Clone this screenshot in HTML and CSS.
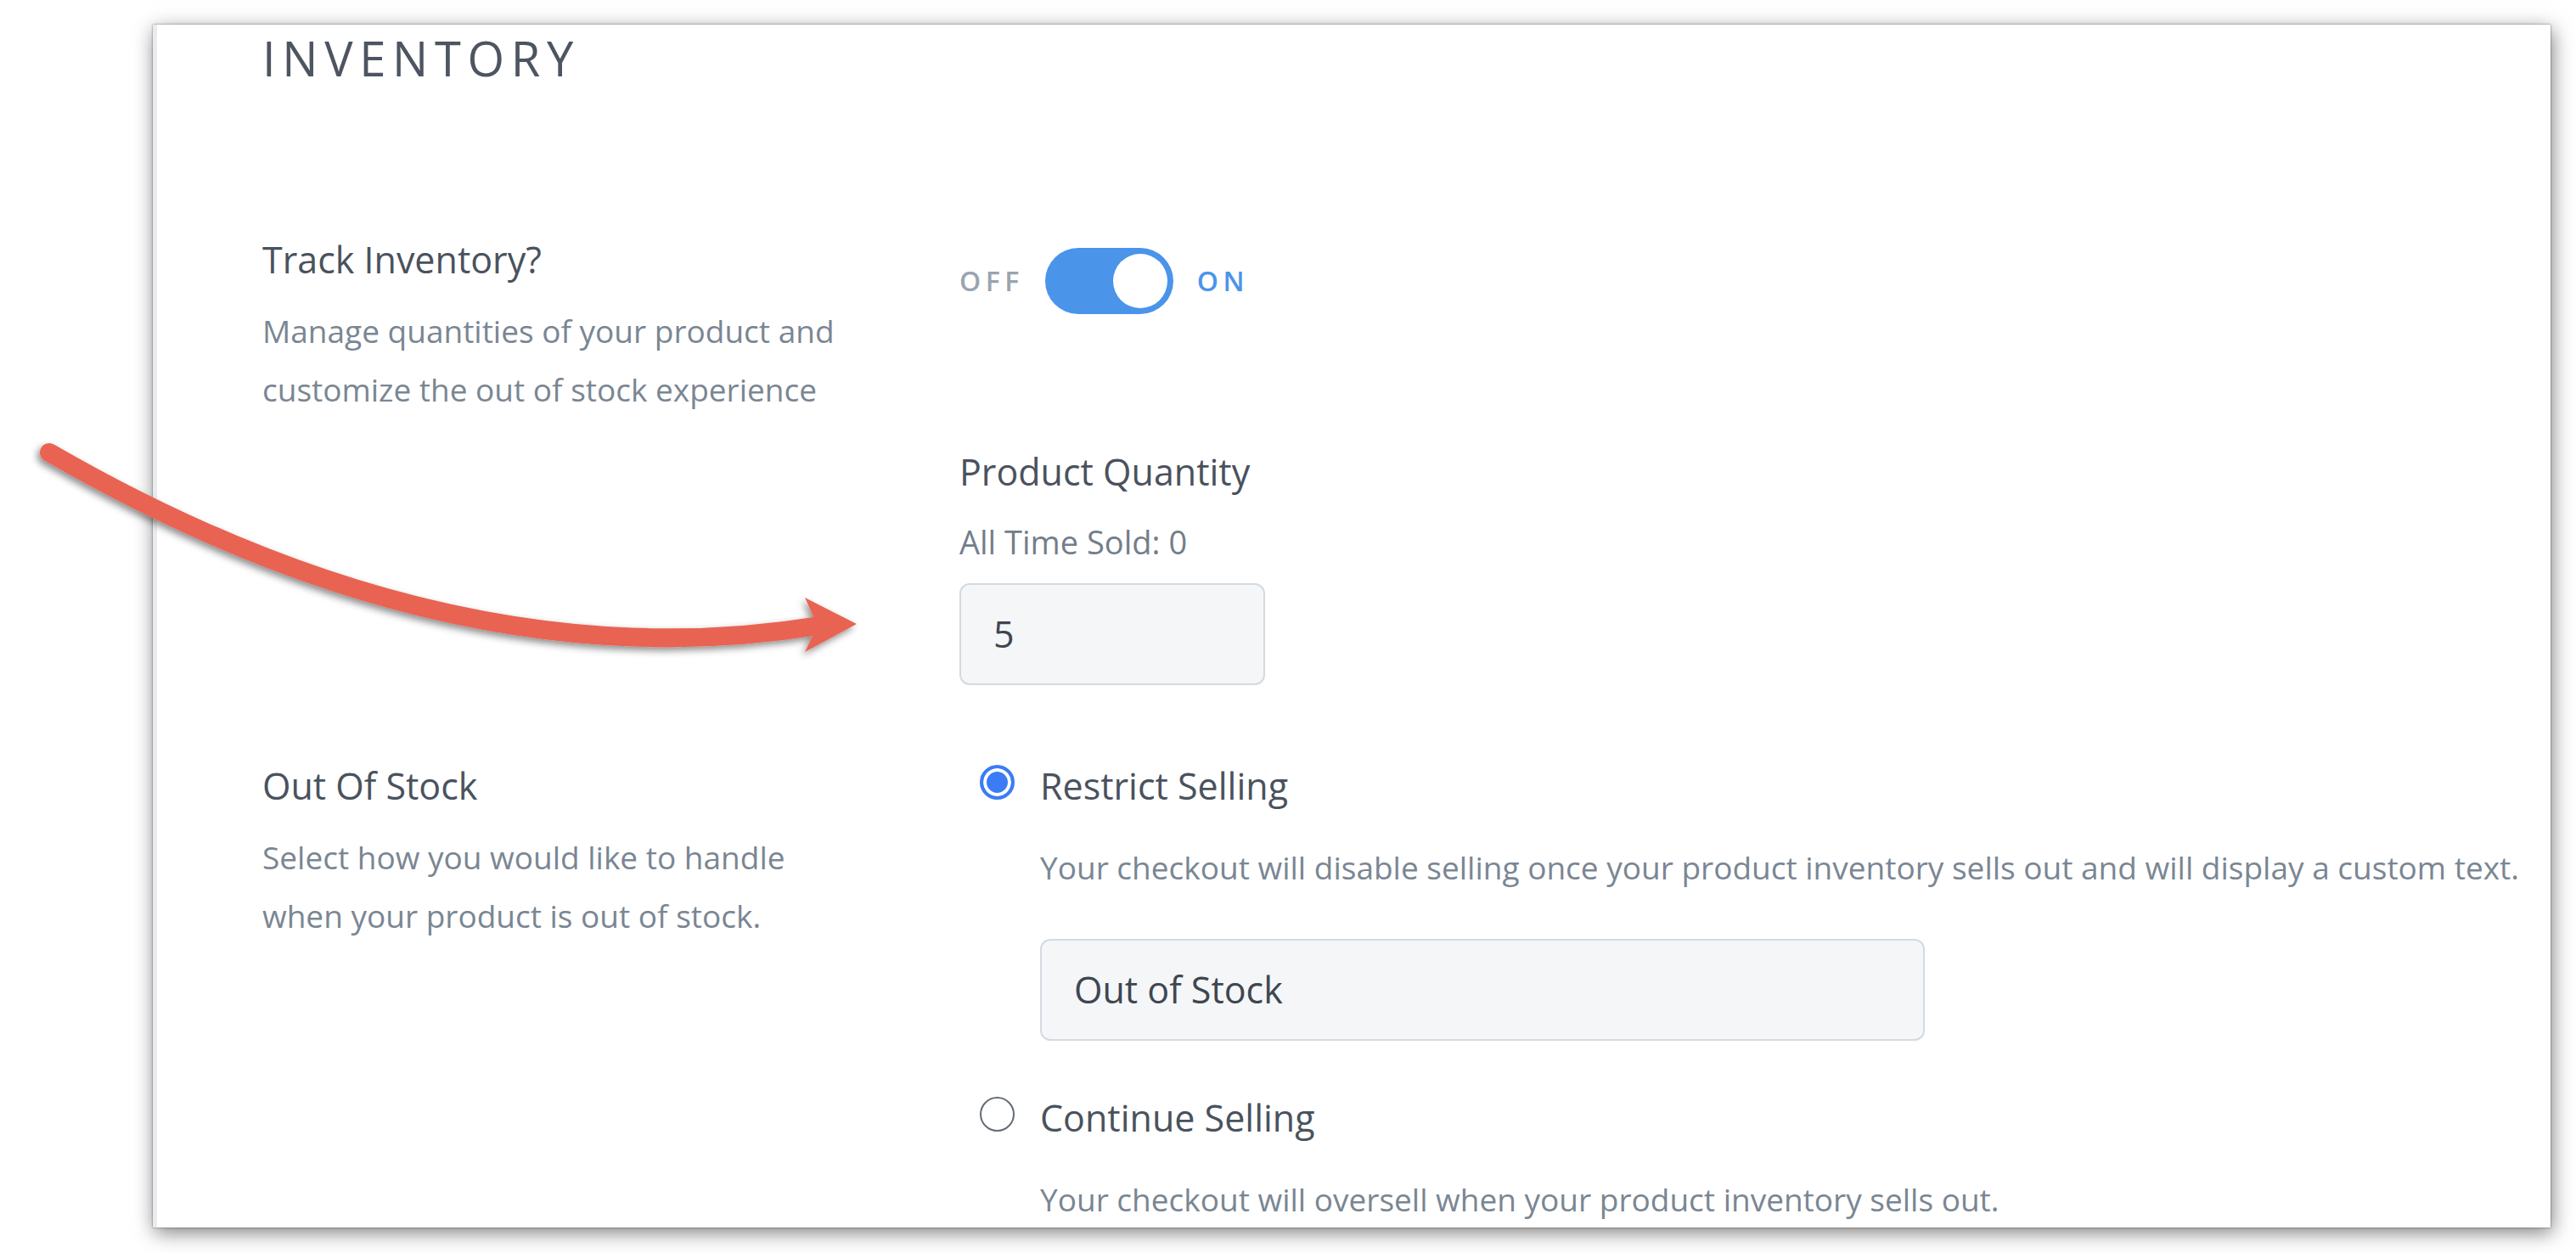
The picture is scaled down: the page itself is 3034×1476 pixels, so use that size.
FILE: index.html
```html
<!DOCTYPE html>
<html lang="en">
<head>
<meta charset="utf-8">
<title>Inventory</title>
<link rel="stylesheet" href="styles.css">
</head>
<body>
<div class="stage">
  <div class="card">
    <h2 class="title">INVENTORY</h2>

    <section class="row row-track">
      <div class="info">
        <div class="label">Track Inventory?</div>
        <p class="desc">Manage quantities of your product and<br>customize the out of stock experience</p>
      </div>
      <div class="control">
        <div class="switch-line">
          <span class="sw sw-off">OFF</span>
          <span class="track"><span class="knob"></span></span>
          <span class="sw sw-on">ON</span>
        </div>
        <div class="label qty-label">Product Quantity</div>
        <div class="sold">All Time Sold: 0</div>
        <input class="field qty" type="text" value="5">
      </div>
    </section>

    <section class="row row-stock">
      <div class="info">
        <div class="label">Out Of Stock</div>
        <p class="desc">Select how you would like to handle<br>when your product is out of stock.</p>
      </div>
      <div class="control">
        <div class="option">
          <span class="radio radio-on"></span>
          <span class="label">Restrict Selling</span>
        </div>
        <p class="opt-desc">Your checkout will disable selling once your product inventory sells out and will display a custom text.</p>
        <input class="field stock-field" type="text" value="Out of Stock">
        <div class="option option-2">
          <span class="radio"></span>
          <span class="label">Continue Selling</span>
        </div>
        <p class="opt-desc">Your checkout will oversell when your product inventory sells out.</p>
      </div>
    </section>
  </div>

  <svg class="arrow" viewBox="0 0 1100 900" width="1100" height="900">
    <defs>
      <filter id="arrowShadow" x="-20%" y="-20%" width="140%" height="160%">
        <feDropShadow dx="-3" dy="4" stdDeviation="4" flood-color="#000" flood-opacity="0.45"/>
      </filter>
    </defs>
    <g filter="url(#arrowShadow)">
      <path d="M58 533 C330 690 640 790 965 737" fill="none" stroke="#e96352" stroke-width="22" stroke-linecap="round"/>
      <path d="M948 704 L1009 735 L948 768 L963 737 Z" fill="#e96352"/>
    </g>
  </svg>
</div>
</body>
</html>
```

FILE: styles.css
```css
html, body {
  margin: 0;
  padding: 0;
  background: #ffffff;
  overflow: hidden;
}

.stage {
  position: relative;
  width: 3034px;
  height: 1476px;
  overflow: hidden;
  font-family: "Open Sans", "Liberation Sans", sans-serif;
}

.card {
  box-sizing: border-box;
  margin: 29px 0 0 180px;
  width: 2824px;
  height: 1417px;
  background: #ffffff;
  border-left: 5px solid #e9ebee;
  padding: 11.3px 0 0 124px;
  overflow: hidden;
  box-shadow: 0 0 2px rgba(0, 0, 0, 0.55), 2px 6px 22px rgba(0, 0, 0, 0.5);
}

.title {
  margin: 0;
  font-size: 56px;
  line-height: 56px;
  font-weight: 400;
  letter-spacing: 7.7px;
  color: #4d5561;
}

.row {
  display: grid;
  grid-template-columns: 821px 1fr;
}

.row-track {
  margin-top: 184.7px;
}

.row-stock {
  margin-top: 94px;
}

.label {
  font-size: 43px;
  line-height: 50px;
  color: #4a525d;
}

.desc {
  margin: 24px 0 0;
  font-size: 37px;
  line-height: 69px;
  color: #7a8693;
  white-space: nowrap;
}

.control {
  min-width: 0;
}

.switch-line {
  display: flex;
  align-items: center;
  height: 78px;
  margin-top: 11px;
}

.sw {
  font-size: 32px;
  line-height: 1;
  font-weight: 600;
  letter-spacing: 5.5px;
}

.sw-off {
  color: #9aa4ae;
  margin-right: 25px;
}

.sw-on {
  color: #4a94ea;
  margin-left: 28px;
}

.track {
  box-sizing: border-box;
  display: flex;
  align-items: center;
  justify-content: flex-end;
  width: 151px;
  height: 78px;
  padding-right: 7px;
  border-radius: 39px;
  background: #4a94ea;
}

.knob {
  width: 64px;
  height: 64px;
  border-radius: 50%;
  background: #ffffff;
}

.qty-label {
  margin-top: 161px;
}

.sold {
  margin-top: 32.4px;
  font-size: 38px;
  line-height: 50px;
  color: #737e8b;
}

.field {
  display: block;
  box-sizing: border-box;
  height: 120px;
  margin: 0;
  padding: 0 38px;
  border: 2px solid #d3dae2;
  border-radius: 12px;
  background: #f5f6f8;
  font-family: "Open Sans", "Liberation Sans", sans-serif;
  font-size: 43px;
  color: #3f4651;
  outline: none;
}

.qty {
  width: 360px;
  margin-top: 23.6px;
}

.option {
  display: flex;
  align-items: flex-start;
  margin-left: 24px;
}

.option-2 {
  margin-top: 66px;
}

.radio {
  box-sizing: border-box;
  flex: none;
  width: 41px;
  height: 41px;
  margin-right: 30px;
  border-radius: 50%;
  border: 2.5px solid #646c77;
  background: #ffffff;
}

.radio-on {
  border: 4px solid #3b7cf6;
  background: #3b7cf6;
  box-shadow: inset 0 0 0 4px #ffffff;
}

.opt-desc {
  margin: 36px 0 0 95px;
  font-size: 37px;
  line-height: 69px;
  color: #7a8693;
  white-space: nowrap;
}

.stock-field {
  width: 1042px;
  margin-left: 95px;
  margin-top: 50px;
}

.arrow {
  position: absolute;
  left: 0;
  top: 0;
  width: 1100px;
  height: 900px;
  overflow: visible;
  pointer-events: none;
}
```
